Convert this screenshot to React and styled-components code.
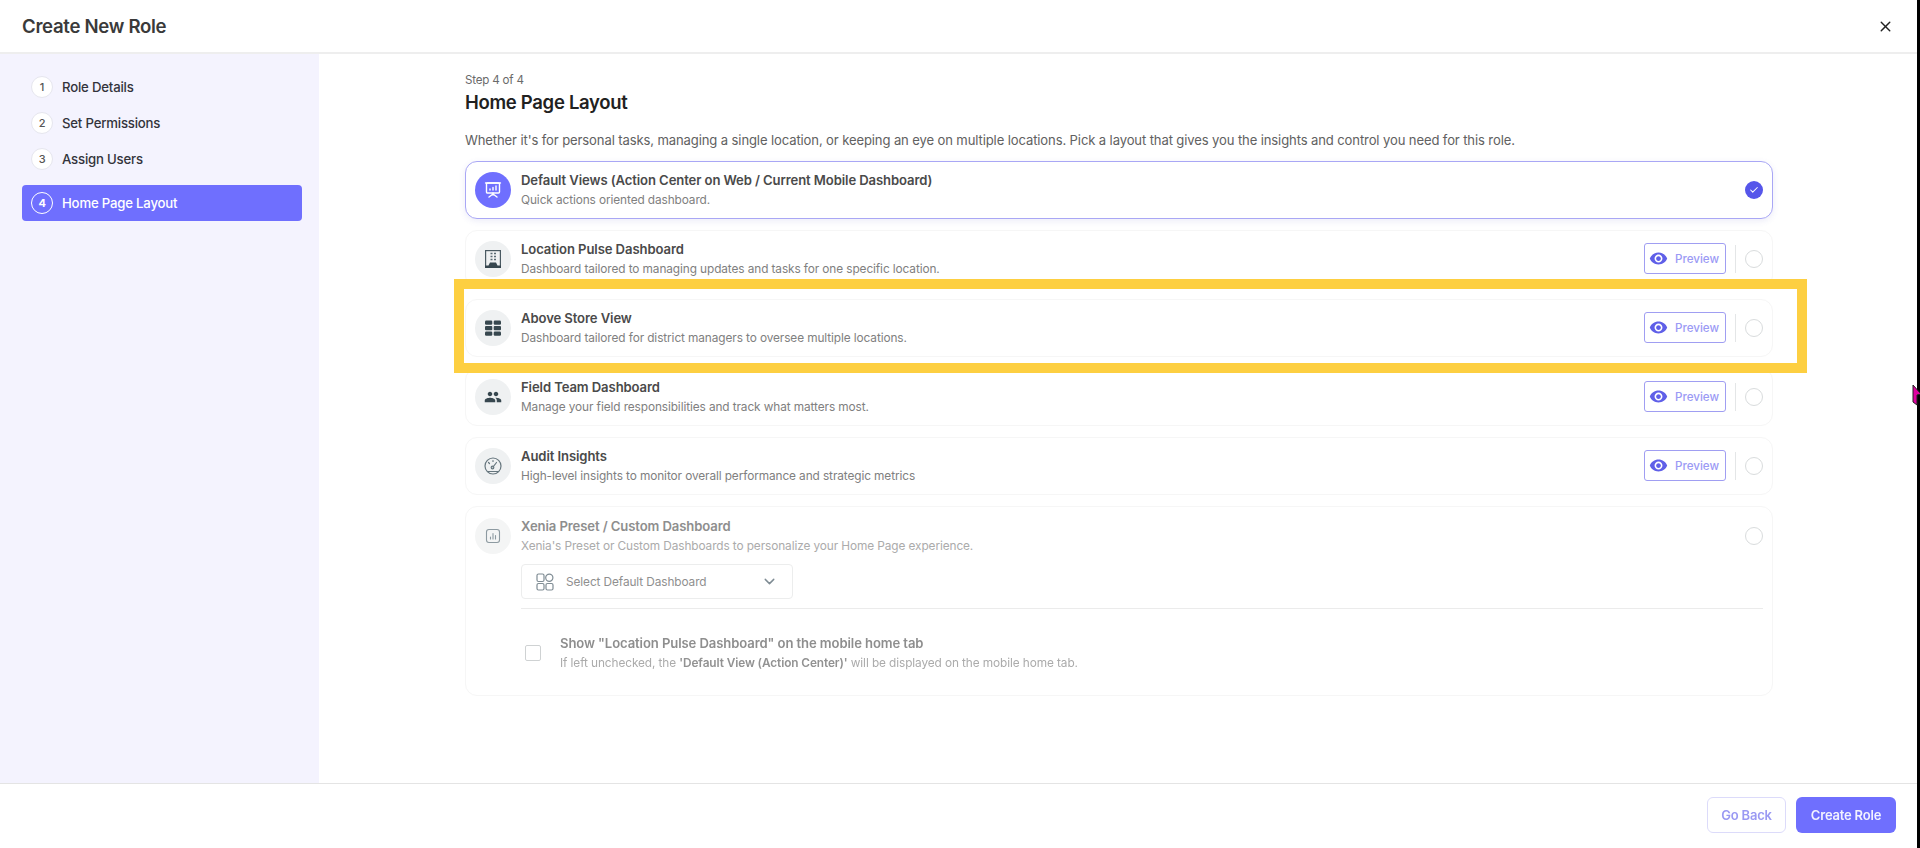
import React from "react"
import styled, { createGlobalStyle } from "styled-components"
import { X, ChevronDown, Check } from "lucide-react"
import { MdVisibility, MdGroup } from "react-icons/md"

const GlobalStyle = createGlobalStyle`
  html, body { margin: 0; padding: 0; background: #fff; }
  * { box-sizing: border-box; }
  body { font-family: Inter, "Noto Sans", sans-serif; color: #212121; }
`

const steps = [
  { n: 1, label: "Role Details" },
  { n: 2, label: "Set Permissions" },
  { n: 3, label: "Assign Users" },
  { n: 4, label: "Home Page Layout", active: true },
]

const SlideIcon = () => (
  <svg width="20" height="20" viewBox="0 0 20 20" fill="none" stroke="#fff" strokeWidth="1.4" strokeLinecap="round" strokeLinejoin="round">
    <path d="M2.5 3h15" />
    <rect x="3.5" y="3" width="13" height="10" rx="1" />
    <path d="M7 10V9M10 10V7.5M13 10V6M10 13v2M10 14l-4 3M10 14l4 3" />
  </svg>
)

const BuildingIcon = () => (
  <svg width="18" height="20" viewBox="0 0 18 20" fill="none">
    <rect x="1.6" y="1.6" width="14.8" height="16.8" stroke="#4a5a62" strokeWidth="1.2" />
    <path d="M6.5 4.5h2M10 4.500h2M6.500 7.500h2M10 7.500h2M6.500 10.500h2M10 10.500h2" stroke="#5a6a72" strokeWidth="1.300" />
    <path d="M1 19v-2.500h3.500l1.500-3h6l1.500 3H17V19z" fill="#37474f" />
  </svg>
)

const TableIcon = () => (
  <svg width="18" height="18" viewBox="0 0 18 18" fill="#37474f">
    <rect x="1" y="1.500" width="7.300" height="4.300" rx="1.200" />
    <rect x="9.700" y="1.500" width="7.300" height="4.300" rx="1.200" />
    <rect x="1" y="7" width="7.300" height="4.300" rx="1" />
    <rect x="9.700" y="7" width="7.300" height="4.300" rx="1" />
    <rect x="1" y="12.500" width="7.300" height="4.300" rx="1.200" />
    <rect x="9.700" y="12.500" width="7.300" height="4.300" rx="1.200" />
  </svg>
)

const GaugeIcon = () => (
  <svg width="20" height="20" viewBox="0 0 20 20" fill="none" stroke="#66767e" strokeWidth="1.200" strokeLinecap="round">
    <circle cx="10" cy="10" r="8" />
    <path d="M10 11l3.500-4.500" />
    <circle cx="9.500" cy="11.500" r="1.300" />
    <path d="M4.500 15.500h11M5.500 6.500l1 1M10 4.500v1" />
  </svg>
)

const ChartIcon = () => (
  <svg width="16" height="16" viewBox="0 0 16 16" fill="none" stroke="#8d9aa1" strokeWidth="1.100" strokeLinecap="round">
    <rect x="1.500" y="1.500" width="13" height="13" rx="2.500" />
    <path d="M5.500 11V9M8 11V5.500M10.500 11V7.500" />
  </svg>
)

const TilesIcon = () => (
  <svg width="18" height="18" viewBox="0 0 18 18" fill="none" stroke="#7f8c94" strokeWidth="1.200">
    <rect x="1" y="1" width="7" height="7.500" rx="1.500" />
    <circle cx="13.300" cy="4.700" r="3.600" />
    <rect x="1" y="10.500" width="7" height="6.500" rx="1.500" />
    <rect x="10" y="10.500" width="7" height="6.500" rx="1.500" />
  </svg>
)

const options = [
  {
    title: "Location Pulse Dashboard",
    desc: "Dashboard tailored to managing updates and tasks for one specific location.",
    icon: <BuildingIcon />,
  },
  {
    title: "Above Store View",
    desc: "Dashboard tailored for district managers to oversee multiple locations.",
    icon: <TableIcon />,
  },
  {
    title: "Field Team Dashboard",
    desc: "Manage your field responsibilities and track what matters most.",
    icon: <MdGroup size={18} color="#37474f" />,
  },
  {
    title: "Audit Insights",
    desc: "High-level insights to monitor overall performance and strategic metrics",
    icon: <GaugeIcon />,
  },
]

const PreviewControls = () => (
  <RowActions>
    <PreviewButton>
      <MdVisibility size={19} color="#5f5fe8" />
      Preview
    </PreviewButton>
    <Divider />
    <Radio />
  </RowActions>
)

export default function App() {
  return (
    <Page>
      <GlobalStyle />
      <Modal>
        <Header>
          <Title>Create New Role</Title>
          <X size={17} color="#212121" strokeWidth={2} />
        </Header>
        <Body>
          <Sidebar>
            {steps.map((s) => (
              <Step key={s.n} $active={s.active}>
                <StepNumber $active={s.active}>{s.n}</StepNumber>
                {s.label}
              </Step>
            ))}
          </Sidebar>
          <Content>
            <StepLabel>Step 4 of 4</StepLabel>
            <Heading>Home Page Layout</Heading>
            <Intro>
              Whether it's for personal tasks, managing a single location, or keeping an eye on multiple locations. Pick a layout that gives you the insights and control you need for this role.
            </Intro>
            <Cards>
              <Card $selected>
                <IconCircle $selected><SlideIcon /></IconCircle>
                <CardText>
                  <CardTitle>Default Views (Action Center on Web / Current Mobile Dashboard)</CardTitle>
                  <CardDesc>Quick actions oriented dashboard.</CardDesc>
                </CardText>
                <CheckedDot><Check size={10} color="#fff" strokeWidth={2.500} /></CheckedDot>
              </Card>
              {options.map((o) => (
                <Card key={o.title}>
                  <IconCircle>{o.icon}</IconCircle>
                  <CardText>
                    <CardTitle>{o.title}</CardTitle>
                    <CardDesc>{o.desc}</CardDesc>
                  </CardText>
                  <PreviewControls />
                </Card>
              ))}
              <BigCard>
                <BigTop>
                  <IconCircle $faded><ChartIcon /></IconCircle>
                  <CardText>
                    <FadedTitle>Xenia Preset / Custom Dashboard</FadedTitle>
                    <FadedDesc>Xenia's Preset or Custom Dashboards to personalize your Home Page experience.</FadedDesc>
                  </CardText>
                  <RowActions><Radio /></RowActions>
                </BigTop>
                <Indented>
                  <Select>
                    <TilesIcon />
                    <SelectLabel>Select Default Dashboard</SelectLabel>
                    <ChevronDown size={17} color="#7f8c94" />
                  </Select>
                  <Rule />
                  <CheckRow>
                    <Checkbox />
                    <div>
                      <FadedTitle>Show "Location Pulse Dashboard" on the mobile home tab</FadedTitle>
                      <HintText>If left unchecked, the <b>'Default View (Action Center)'</b> will be displayed on the mobile home tab.</HintText>
                    </div>
                  </CheckRow>
                </Indented>
              </BigCard>
            </Cards>
          </Content>
        </Body>
        <Footer>
          <BackButton>Go Back</BackButton>
          <CreateButton>Create Role</CreateButton>
        </Footer>
      </Modal>
      <EdgeStrip />
      <Highlight />
      <Cursor viewBox="0 0 10 22">
        <path d="M1 1l8 9-4 1v10l-4-3z" fill="#e000a0" stroke="#222" strokeWidth="1" />
      </Cursor>
    </Page>
  )
}

const Page = styled.div`
  position: relative;
  display: flex;
  width: 100%;
  height: 100vh;
  overflow: hidden;
  filter: blur(0.5px);
`

const Modal = styled.div`
  flex: 1;
  min-width: 0;
  display: flex;
  flex-direction: column;
  background: #fff;
`

const EdgeStrip = styled.div`
  width: 3px;
  background: #000;
`

const Header = styled.div`
  height: 54px;
  flex: none;
  display: flex;
  align-items: center;
  justify-content: space-between;
  padding: 0 23px 0 22px;
  border-bottom: 2px solid #eeeeee;
`

const Title = styled.div`
  font-size: 18.6px;
  font-weight: 600;
  letter-spacing: -0.3px;
  color: #3a3a3a;
`

const Body = styled.div`
  flex: 1;
  min-height: 0;
  display: flex;
`

const Sidebar = styled.div`
  width: 319px;
  flex: none;
  background: #f4f3fe;
  padding: 15px 17px 0 22px;
  display: flex;
  flex-direction: column;
`

const Step = styled.div`
  height: 36px;
  display: flex;
  align-items: center;
  gap: 9px;
  padding-left: 9px;
  font-size: 13.2px;
  font-weight: 500;
  letter-spacing: -0.2px;
  color: ${(p) => (p.$active ? "#fff" : "#33333b")};
  background: ${(p) => (p.$active ? "#6f6ffe" : "transparent")};
  border-radius: 4px;
  margin-top: ${(p) => (p.$active ? "8px" : "0")};
`

const StepNumber = styled.span`
  width: 22px;
  height: 22px;
  border-radius: 50%;
  display: flex;
  align-items: center;
  justify-content: center;
  font-size: 11px;
  font-weight: ${(p) => (p.$active ? 700 : 500)};
  background: ${(p) => (p.$active ? "transparent" : "#fff")};
  border: ${(p) => (p.$active ? "1.5px solid #fff" : "1px solid #e6e6ee")};
  color: ${(p) => (p.$active ? "#fff" : "#555")};
`

const Content = styled.div`
  width: 1308px;
  margin-left: 146px;
  padding-top: 18px;
`

const StepLabel = styled.div`
  font-size: 11.6px;
  line-height: 16px;
  color: #6a6a6a;
  letter-spacing: -0.2px;
`

const Heading = styled.div`
  margin-top: 1px;
  font-size: 18.5px;
  line-height: 26px;
  font-weight: 600;
  letter-spacing: -0.3px;
  color: #212121;
`

const Intro = styled.div`
  margin-top: 16px;
  font-size: 13.07px;
  line-height: 18px;
  color: #616161;
  letter-spacing: -0.12px;
  white-space: nowrap;
`

const Cards = styled.div`
  margin-top: 12px;
  display: flex;
  flex-direction: column;
  gap: 11px;
`

const Card = styled.div`
  height: 58px;
  display: flex;
  align-items: center;
  padding: 0 9px 0 9px;
  border-radius: 12px;
  background: #fff;
  border: ${(p) => (p.$selected ? "1.5px solid #a9a7f5" : "1.5px solid #f6f6f6")};
  box-shadow: ${(p) => (p.$selected ? "0 2px 6px rgba(100, 100, 200, 0.12)" : "none")};
`

const IconCircle = styled.div`
  width: 36px;
  height: 36px;
  flex: none;
  border-radius: 50%;
  display: flex;
  align-items: center;
  justify-content: center;
  background: ${(p) => (p.$selected ? "#6f6ffe" : p.$faded ? "#f4f5f5" : "#eff1f2")};
`

const CardText = styled.div`
  flex: 1;
  min-width: 0;
  margin-left: 10px;
`

const CardTitle = styled.div`
  font-size: 13.1px;
  line-height: 18px;
  font-weight: 600;
  color: #4a4a4a;
  letter-spacing: -0.1px;
`

const CardDesc = styled.div`
  margin-top: 3px;
  font-size: 11.85px;
  line-height: 17px;
  color: #808080;
  letter-spacing: -0.1px;
`

const FadedTitle = styled(CardTitle)`
  color: #8e8e8e;
`

const FadedDesc = styled(CardDesc)`
  color: #ababab;
`

const HintText = styled(FadedDesc)`
  b { font-weight: 600; color: #929292; }
`

const RowActions = styled.div`
  display: flex;
  align-items: center;
  margin-bottom: 1px;
`

const PreviewButton = styled.div`
  width: 82px;
  height: 31px;
  display: flex;
  align-items: center;
  gap: 7px;
  padding-left: 4px;
  border: 1.5px solid #a09ef2;
  border-radius: 3px;
  color: #9b9af5;
  font-size: 11.6px;
  font-weight: 500;
`

const Divider = styled.div`
  width: 1px;
  height: 28px;
  margin: 0 9px;
  background: #e4e6e7;
`

const Radio = styled.div`
  width: 18px;
  height: 18px;
  flex: none;
  border-radius: 50%;
  border: 1.5px solid #d9dcdd;
`

const CheckedDot = styled.div`
  width: 18px;
  height: 18px;
  border-radius: 50%;
  display: flex;
  align-items: center;
  justify-content: center;
  background: #5656ea;
`

const BigCard = styled.div`
  height: 190px;
  padding: 9px 9px 0 9px;
  border-radius: 12px;
  border: 1.5px solid #f6f6f6;
`

const BigTop = styled.div`
  display: flex;
  align-items: center;
  height: 40px;
`

const Indented = styled.div`
  margin-left: 46px;
`

const Select = styled.div`
  margin-top: 8px;
  width: 272px;
  height: 35px;
  display: flex;
  align-items: center;
  padding: 0 14px;
  border: 1px solid #eceded;
  border-radius: 4px;
`

const SelectLabel = styled.span`
  flex: 1;
  margin-left: 12px;
  font-size: 11.85px;
  color: #8f8f8f;
  letter-spacing: -0.1px;
`

const Rule = styled.div`
  height: 1px;
  margin-top: 9px;
  background: #ebebeb;
`

const CheckRow = styled.div`
  display: flex;
  align-items: center;
  gap: 19px;
  margin-top: 25px;
  padding-left: 4px;
`

const Checkbox = styled.div`
  width: 16px;
  height: 16px;
  flex: none;
  border: 1.5px solid #cfd2d3;
  border-radius: 2px;
`

const Footer = styled.div`
  height: 65px;
  flex: none;
  display: flex;
  align-items: flex-start;
  justify-content: flex-end;
  gap: 10px;
  padding: 13px 21px 0 0;
  border-top: 1px solid #e4e4e4;
`

const BackButton = styled.div`
  width: 79px;
  height: 36px;
  display: flex;
  align-items: center;
  justify-content: center;
  border: 1.5px solid #dcdbfa;
  border-radius: 6px;
  color: #9a99f3;
  font-size: 13px;
  font-weight: 600;
  letter-spacing: -0.2px;
`

const CreateButton = styled.div`
  width: 100px;
  height: 36px;
  display: flex;
  align-items: center;
  justify-content: center;
  background: #6f6ffe;
  border-radius: 6px;
  color: #f2f2ff;
  font-size: 13px;
  font-weight: 600;
  letter-spacing: -0.2px;
`

const Highlight = styled.div`
  position: absolute;
  left: 454px;
  top: 279px;
  width: 1353px;
  height: 94px;
  border: 10px solid #fdcf41;
  pointer-events: none;
`

const Cursor = styled.svg`
  position: absolute;
  left: 1912px;
  top: 384px;
  width: 10px;
  height: 22px;
`
